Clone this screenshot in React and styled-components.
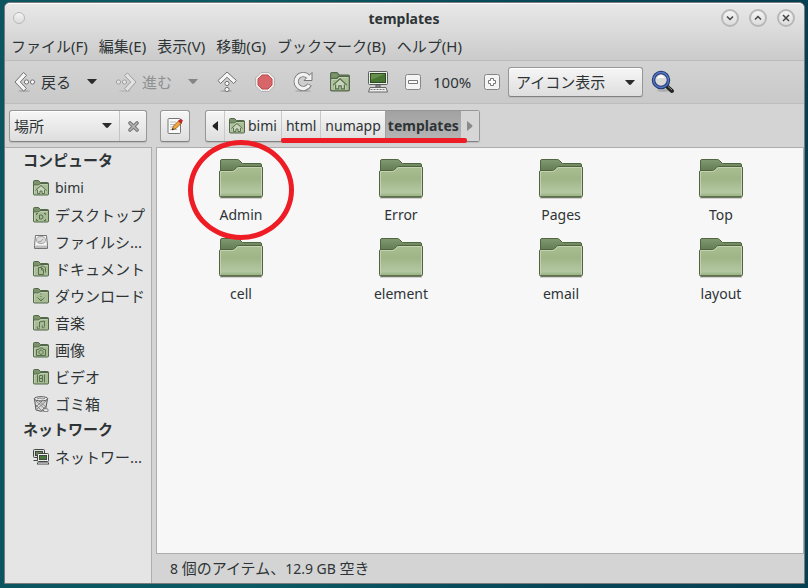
import React, { useState } from 'react';
import styled, { createGlobalStyle, css } from 'styled-components';

const GlobalStyle = createGlobalStyle`
  * {
    box-sizing: border-box;
  }
  body {
    margin: 0;
    background: linear-gradient(90deg, #0b5560 0%, #0a5a63 30%, #074557 70%, #054052 100%);
    color: #2e3436;
    font-family: 'Noto Sans', 'Noto Sans CJK JP', sans-serif;
    font-size: 15px;
    line-height: 20px;
  }
  button, select {
    margin: 0;
    padding: 0;
    border: 0;
    background: none;
    color: inherit;
    font: inherit;
  }
  svg {
    display: block;
    flex: none;
  }
`;

const Desktop = styled.div`
  display: flex;
  min-height: 100vh;
  padding: 2px 3px 4px 4px;
`;

const Window = styled.div`
  flex: 1;
  min-width: 0;
  display: flex;
  flex-direction: column;
  border: 1px solid #7b7b7b;
  border-radius: 6px 6px 0 0;
  background: #d4d4d4;
`;

const Header = styled.header`
  border-top: 1px solid #fff;
  border-bottom: 1px solid #bcbcbc;
  border-radius: 5px 5px 0 0;
  background: linear-gradient(#e8e8e8, #cbcbcb);
`;

const TitleBar = styled.div`
  display: grid;
  grid-template-columns: 1fr auto 1fr;
  align-items: center;
  height: 27px;
  padding: 0 9px 0 8px;
`;

const Title = styled.h1`
  margin: 0;
  padding-top: 3px;
  font-size: 14px;
  line-height: 20px;
`;

const TitleButtons = styled.div`
  display: flex;
  justify-content: ${({ $end }) => ($end ? 'flex-end' : 'flex-start')};
  gap: 10px;
`;

const RoundButton = styled.button`
  display: flex;
  align-items: center;
  justify-content: center;
  width: ${({ $small }) => ($small ? '12px' : '18px')};
  height: ${({ $small }) => ($small ? '12px' : '18px')};
  border: ${({ $small }) => ($small ? '1px' : '2px')} solid #b8b8b8;
  border-radius: 50%;
  background: linear-gradient(#f4f4f4, #dcdcdc);
`;

const MenuBar = styled.nav`
  display: flex;
  gap: 11px;
  height: 29px;
  padding: 4px 6px 0;
`;

const MenuButton = styled.button`
  height: 22px;
  white-space: nowrap;
`;

const Toolbar = styled.div`
  display: flex;
  align-items: center;
  height: 43px;
  padding: 0 9px;
  border-bottom: 1px solid #bdbdbd;
  background: linear-gradient(#d3d3d3, #c9c9c9);
`;

const ToolButton = styled.button`
  display: flex;
  align-items: center;
  gap: 5px;
  height: 32px;
  margin-right: ${({ $space }) => $space || 16}px;
  white-space: nowrap;

  &:disabled {
    color: #8f9191;
  }
`;

const ZoomLabel = styled.span`
  width: 39px;
  margin-right: 12px;
`;

const raised = css`
  border: 1px solid #979797;
  border-bottom-color: #828282;
  border-radius: 3px;
  background: linear-gradient(#f6f6f6, #dedede);
  box-shadow: inset 0 1px 0 #fff, 0 1px 1px #bcbcbc;
`;

const SelectBox = styled.div`
  position: relative;
  width: ${({ $width }) => $width}px;
  height: 30px;
  ${({ $flat }) => !$flat && raised}
  ${({ $flat }) => !$flat && 'margin-right: 8px;'}

  select {
    width: 100%;
    height: 100%;
    padding: 0 ${({ $flat }) => ($flat ? 4 : 7)}px;
    appearance: none;
  }
  svg {
    position: absolute;
    right: 7px;
    top: 12px;
    pointer-events: none;
  }
`;

const LocationBar = styled.div`
  display: flex;
  align-items: flex-start;
  height: 43px;
  padding: 6px 4px 0;
`;

const SideChooser = styled.div`
  display: flex;
  height: 32px;
  margin-right: 13px;
  ${raised}
`;

const SquareButton = styled.button`
  display: flex;
  align-items: center;
  justify-content: center;
  width: ${({ $inner }) => ($inner ? 27 : 30)}px;
  height: ${({ $inner }) => ($inner ? 30 : 32)}px;
  ${({ $inner }) => ($inner ? 'border-left: 1px solid #c4c4c4;' : raised)}
`;

const PathBar = styled.div`
  display: flex;
  height: 32px;
  margin-left: 15px;
  ${raised}
`;

const PathMarked = styled.div`
  position: relative;
  display: flex;
`;

const PathButton = styled.button`
  display: flex;
  align-items: center;
  justify-content: center;
  gap: 3px;
  height: 30px;
  padding: 0 ${({ $arrow }) => ($arrow ? 6 : 4)}px;
  border-left: ${({ $first }) => ($first ? 0 : 1)}px solid #c9c9c9;
  font-size: 14px;

  &:disabled {
    background: #d6d6d6;
  }
  ${({ $current }) =>
    $current &&
    css`
      padding: 0 2px;
      border-left-color: #a0a0a0;
      background: linear-gradient(#a2a2a2, #b6b6b6);
      font-weight: bold;
    `}
`;

const Underline = styled.div`
  position: absolute;
  left: 0;
  right: -6px;
  top: 27px;
  height: 5px;
  border-radius: 2px;
  background: #ee1c24;
`;

const Body = styled.div`
  flex: 1;
  display: grid;
  grid-template-columns: 147px minmax(0, 1fr);
  gap: 4px;
`;

const Sidebar = styled.aside`
  border: solid #adadad;
  border-width: 1px 1px 0 0;
  background: #e5e5e5;
`;

const SideHeading = styled.h2`
  margin: 0;
  padding-left: 18px;
  height: 26px;
  font-size: 15px;
  line-height: 24px;
`;

const SideList = styled.ul`
  margin: 0;
  padding: 0;
  list-style: none;
`;

const SideItem = styled.a`
  display: flex;
  align-items: center;
  gap: 6px;
  height: 27px;
  padding-left: 28px;
  color: inherit;
  font-size: ${({ $latin }) => ($latin ? 14 : 15)}px;
  text-decoration: none;
  white-space: nowrap;
`;

const Main = styled.main`
  display: flex;
  flex-direction: column;
`;

const IconView = styled.div`
  flex: 1;
  display: grid;
  grid-template-columns: repeat(4, 1fr);
  grid-auto-rows: 79px;
  padding: 8px 2px 8px 4px;
  border: 1px solid #adadad;
  background: #f7f7f7;
`;

const FolderItem = styled.a`
  position: relative;
  display: flex;
  flex-direction: column;
  align-items: center;
  gap: 1px;
  color: inherit;
  font-size: 14px;
  text-decoration: none;
`;

const Circle = styled.div`
  position: absolute;
  left: 50%;
  top: -16px;
  z-index: 1;
  width: 106px;
  height: 100px;
  margin-left: -53px;
  border: 5px solid #ee1c24;
  border-radius: 50%;
`;

const StatusBar = styled.footer`
  height: 29px;
  padding: 4px 14px;

  small {
    font-size: 14px;
  }
`;

const DownArrow = ({ color = '#2b2b2b' }) => (
  <svg width="10" height="6" viewBox="0 0 10 6">
    <path d="M0 0h10L6 4.600q-1 .8-2 0z" fill={color} />
  </svg>
);

const SideArrow = ({ right }) => (
  <svg width="6" height="10" viewBox="0 0 6 10">
    <path d={right ? 'M0 0v10l5-4q1-1 0-2z' : 'M6 0v10L1 6Q0 5 1 4z'} fill={right ? '#8a8a8a' : '#222'} />
  </svg>
);

// direction arrow with two beads as its shaft
const BeadArrow = ({ rotate = 0, faded }) => (
  <svg width="22" height="22" viewBox="0 0 22 22" opacity={faded ? 0.5 : 1}>
    <ellipse cx="10" cy="20" rx="6" ry="1" fill="#000" opacity=".15" />
    <g transform={`rotate(${rotate} 11 11)`} strokeLinejoin="round">
      <path d="M9.500 1.500l3 2.800L6.300 11l6.200 6.500-3 2.500L1 11z" fill="#f4f4f4" stroke="#737373" />
      <circle cx="12.500" cy="11" r="2.100" fill="#fafafa" stroke="#737373" />
      <circle cx="18.500" cy="11" r="2.100" fill="#fafafa" stroke="#737373" />
    </g>
  </svg>
);

const StopIcon = () => (
  <svg width="22" height="22" viewBox="0 0 22 22">
    <path d="M7 1.500h8l5.500 5.500v8L15 20.500H7L1.500 15V7z" fill="#ececec" stroke="#b3b3b3" />
    <path d="M8 4h6l4 4v6l-4 4H8l-4-4V8z" fill="#d66668" stroke="#c14b4e" />
  </svg>
);

const ReloadIcon = () => (
  <svg width="22" height="22" viewBox="0 0 22 22" fill="none">
    <ellipse cx="11" cy="20" rx="8" ry="1" fill="#000" opacity=".15" />
    <path d="M16.500 6A7 7 0 1 0 17.500 13.500" stroke="#777" strokeWidth="5" />
    <path d="M12 9.500h8V1.500z" fill="#f2f2f2" stroke="#777" strokeLinejoin="round" />
    <path d="M16.500 6A7 7 0 1 0 17.200 14" stroke="#f2f2f2" strokeWidth="3.400" />
  </svg>
);

const glyphs = {
  home: <path d="M2.500 10.500l5.500-5 5.500 5M4.500 10v3.500h2.500v-2.500h2v2.500h2.500V10" />,
  desktop: <path d="M5 6.500H3.500V8M11 6.500h1.500V8M5 13.500H3.500V12M11 13.500h1.500V12M6.500 8v4h1.500q2 0 2-2t-2-2z" />,
  documents: <path d="M5.500 6.500h3l2 2v5h-5zM8.500 6.500v2.500h2M7.500 5h3l2 2v4.500" />,
  downloads: <path d="M8 5.500v1M8 8v1M4.500 9.500L8 13l3.500-3.500M8 10.500v1" />,
  music: <path d="M6.500 12V7l5-1v5M5 11.500a1.200 1.200 0 1 0 1.500 1M10 10.500a1.200 1.200 0 1 0 1.500 1" />,
  pictures: <path d="M3.500 7.500h2l1-1.500h3l1 1.500h2v6h-9zM8 8a2.200 2.200 0 1 0 .1 0z" />,
  videos: <path d="M4.500 5.500v8M11.500 5.500v8M6.500 6.500h3v6h-3zM6.500 9.500h3" />,
};

const SmallFolder = ({ glyph, size = 16 }) => (
  <svg width={size} height={size} viewBox="0 0 16 16">
    <path d="M.5 14V1.500q0-1 1-1h4L7.500 2.500h7q1 0 1 1V14z" fill="#7b9469" stroke="#53684a" />
    <path d="M.5 5h5L7 3.500h8.500V14q0 1-1 1h-13q-1 0-1-1z" fill="#a8bc95" stroke="#53684a" />
    <path d="M1.500 14V6h4.500l1.500-1.500h7" fill="none" stroke="#c8d6bb" strokeWidth=".7" />
    {glyph === 'home' && <path d="M3.500 10L8 6l4.500 4v3.500h-9z" fill="#c9d6bd" />}
    <g fill="none" stroke="#5a704d" strokeWidth="1">{glyphs[glyph]}</g>
  </svg>
);

const ComputerIcon = () => (
  <svg width="22" height="22" viewBox="0 0 22 22">
    <rect x="1.500" y=".5" width="19" height="13" rx="1" fill="#ededed" stroke="#5c5f5c" />
    <rect x="3.500" y="2.500" width="15" height="9" fill="#487531" stroke="#294c20" />
    <path d="M4 3h14L4 9z" fill="#73985a" opacity=".7" />
    <path d="M9 14h4v2H9z" fill="#b5b5b5" stroke="#555" />
    <path d="M3 16.500h16l1.500 4.500h-19z" fill="#eee" stroke="#686868" />
    <path d="M3.500 18.500h15" stroke="#777" strokeDasharray="2 1" />
  </svg>
);

const ZoomIcon = ({ plus }) => (
  <svg width="16" height="16" viewBox="0 0 16 16">
    <rect x=".5" y=".5" width="15" height="15" rx="2" fill="#f4f4f4" stroke="#858585" />
    <path
      d={plus ? 'M6.500 4.500h3v2h2v3h-2v2h-3v-2h-2v-3h2z' : 'M3.500 6.500h9v3h-9z'}
      fill="#fff"
      stroke="#777"
    />
  </svg>
);

const SearchIcon = () => (
  <svg width="24" height="24" viewBox="0 0 24 24">
    <ellipse cx="13" cy="20.500" rx="7" ry="1.500" fill="#000" opacity=".15" />
    <path d="M15.500 16l5.500 5" stroke="#222" strokeWidth="4" strokeLinecap="round" />
    <path d="M17 16.500l4 3.500" stroke="#8b8b7b" strokeWidth="1" />
    <circle cx="10" cy="10" r="7.500" fill="#d9d9d9" stroke="#203a72" strokeWidth="3.500" />
    <circle cx="10" cy="10" r="7.500" fill="none" stroke="#5875c4" strokeWidth="1.500" />
    <path d="M6 9q1-4 5-4l3 3q-4-1-8 1z" fill="#fff" />
  </svg>
);

const CloseIcon = () => (
  <svg width="11" height="11" viewBox="0 0 11 11">
    <path d="M2 2l7 7M9 2l-7 7" stroke="#777" strokeWidth="3.600" strokeLinecap="round" />
    <path d="M2 2l7 7M9 2l-7 7" stroke="#b5b5b5" strokeWidth="1.500" strokeLinecap="round" />
  </svg>
);

const EditIcon = () => (
  <svg width="16" height="16" viewBox="0 0 16 16">
    <rect x="1" y=".5" width="12.500" height="15" rx="1" fill="#fafafa" stroke="#777" />
    <path d="M3 4h6M3 6.500h5M3 9h3M3 11.500h7" stroke="#bbb" />
    <path d="M5 12l1.500-4L12 2.500 14.500 5 9 10.500z" fill="#f2a63b" stroke="#84551d" strokeWidth=".8" />
    <path d="M11.500 3L13 1.500q1.500-.5 2.500 1l-1.500 3z" fill="#d4202c" stroke="#8d1720" strokeWidth=".6" />
    <path d="M5 12l.7-2 1.300 1.200z" fill="#222" />
  </svg>
);

const DiskIcon = () => (
  <svg width="16" height="16" viewBox="0 0 16 16">
    <path d="M2.500 1.500h11l1 10v3h-13v-3z" fill="#f5f5f5" stroke="#737373" />
    <ellipse cx="8" cy="6" rx="4.500" ry="3.500" fill="#dcdcdc" stroke="#a5a5a5" />
    <path d="M5 8q4 0 5-3" stroke="#999" fill="none" />
    <path d="M2 11.500h12v2.500H2z" fill="#bcbcbc" />
  </svg>
);

const TrashIcon = () => (
  <svg width="16" height="16" viewBox="0 0 16 16">
    <path d="M1.500 3l1.500 11q5 2.500 9.500 0L14.500 3z" fill="#d8d8d8" stroke="#555" />
    <path d="M3 5l9 8M6 5l7 6M3 9l6 6M13 5l-9 8M9 5l-6 6M13 10l-5 5" stroke="#777" strokeWidth=".8" />
    <ellipse cx="8" cy="2.800" rx="6.800" ry="2.100" fill="#efefef" stroke="#555" />
    <path d="M4 3l3-1 2 1 3-.5" stroke="#888" fill="none" />
    <path d="M11 12.500l4 .5v2.500h-4.500z" fill="#eee" stroke="#666" strokeWidth=".7" />
  </svg>
);

const NetworkIcon = () => (
  <svg width="16" height="16" viewBox="0 0 16 16" stroke="#424642">
    <rect x=".5" y=".5" width="11" height="8" rx="1" fill="#ddd" />
    <rect x="2.500" y="2.500" width="7" height="4" fill="#638653" />
    <path d="M.5 11.500h4" />
    <rect x="4.500" y="4.500" width="11" height="8" rx="1" fill="#eee" />
    <rect x="6.500" y="6.500" width="7" height="4" fill="#477936" />
    <path d="M4 14.500h12" strokeWidth="2" />
    <path d="M5 14.500h10" stroke="#ddd" strokeWidth=".7" />
  </svg>
);

const Folder = () => (
  <svg width="48" height="48" viewBox="0 0 48 48">
    <defs>
      <linearGradient id="front" x1="0" y1="0" x2="0" y2="1">
        <stop offset="0" stopColor="#a9bf92" />
        <stop offset=".4" stopColor="#9fb587" />
        <stop offset=".85" stopColor="#b3c8a2" />
        <stop offset="1" stopColor="#93ac7c" />
      </linearGradient>
      <linearGradient id="back" x1="0" y1="0" x2="0" y2="1">
        <stop offset="0" stopColor="#829971" />
        <stop offset=".35" stopColor="#5f7850" />
      </linearGradient>
    </defs>
    <path d="M3 42h42" stroke="#000" strokeWidth="2" opacity=".15" />
    <path d="M3.500 39V5q0-1.500 1.500-1.500h15.500q1 0 2 1l3 3H43q1.500 0 1.500 1.500v30z" fill="url(#back)" stroke="#50663f" />
    <path
      d="M2.500 16q0-1.500 1.500-1.500h11.500q1 0 2-1l2-2q1-1 2.500-1H44q1.500 0 1.500 1.500v27.500q0 1.500-1.500 1.500H4q-1.500 0-1.500-1.500z"
      fill="url(#front)"
      stroke="#50633f"
    />
    <path d="M3.500 39.500v-24h12.500q1 0 2-1l2-2q1-1 2-1h22.500v28" fill="none" stroke="#c9d7ba" opacity=".8" />
    <path d="M4 41h40" stroke="#485a3b" />
  </svg>
);

const menus = ['ファイル(F)', '編集(E)', '表示(V)', '移動(G)', 'ブックマーク(B)', 'ヘルプ(H)'];

const places = [
  { name: 'bimi', icon: <SmallFolder glyph="home" />, latin: true },
  { name: 'デスクトップ', icon: <SmallFolder glyph="desktop" /> },
  { name: 'ファイルシ...', icon: <DiskIcon /> },
  { name: 'ドキュメント', icon: <SmallFolder glyph="documents" /> },
  { name: 'ダウンロード', icon: <SmallFolder glyph="downloads" /> },
  { name: '音楽', icon: <SmallFolder glyph="music" /> },
  { name: '画像', icon: <SmallFolder glyph="pictures" /> },
  { name: 'ビデオ', icon: <SmallFolder glyph="videos" /> },
  { name: 'ゴミ箱', icon: <TrashIcon /> },
];

const network = [{ name: 'ネットワー...', icon: <NetworkIcon /> }];

const folders = ['Admin', 'Error', 'Pages', 'Top', 'cell', 'element', 'email', 'layout'];

const Places = ({ items }) => (
  <SideList>
    {items.map((item) => (
      <li key={item.name}>
        <SideItem href="#" $latin={item.latin}>
          {item.icon}
          {item.name}
        </SideItem>
      </li>
    ))}
  </SideList>
);

const WindowControl = ({ label, d }) => (
  <RoundButton aria-label={label}>
    <svg width="8" height="8" viewBox="0 0 8 8">
      <path d={d} fill="none" stroke="#444" strokeWidth="1.500" />
    </svg>
  </RoundButton>
);

const App = () => {
  const [view, setView] = useState('icon');
  const [side, setSide] = useState('places');

  return (
    <Desktop>
      <GlobalStyle />
      <Window>
        <Header>
          <TitleBar>
            <TitleButtons>
              <RoundButton $small aria-label="メニュー" />
            </TitleButtons>
            <Title>templates</Title>
            <TitleButtons $end>
              <WindowControl label="最小化" d="M1 2.500l3 3 3-3" />
              <WindowControl label="最大化" d="M1 5.500l3-3 3 3" />
              <WindowControl label="閉じる" d="M1 1l6 6M7 1l-6 6" />
            </TitleButtons>
          </TitleBar>
          <MenuBar>
            {menus.map((menu) => (
              <MenuButton key={menu}>{menu}</MenuButton>
            ))}
          </MenuBar>
        </Header>
        <Toolbar>
          <ToolButton><BeadArrow />戻る</ToolButton>
          <ToolButton $space={18} aria-label="履歴"><DownArrow /></ToolButton>
          <ToolButton disabled><BeadArrow rotate={180} faded />進む</ToolButton>
          <ToolButton $space={18} disabled aria-label="履歴"><DownArrow color="#858585" /></ToolButton>
          <ToolButton aria-label="上へ"><BeadArrow rotate={90} /></ToolButton>
          <ToolButton aria-label="中止"><StopIcon /></ToolButton>
          <ToolButton aria-label="再読み込み"><ReloadIcon /></ToolButton>
          <ToolButton $space={17} aria-label="ホーム"><SmallFolder glyph="home" size={20} /></ToolButton>
          <ToolButton aria-label="コンピュータ"><ComputerIcon /></ToolButton>
          <ToolButton $space={12} aria-label="縮小"><ZoomIcon /></ToolButton>
          <ZoomLabel>100%</ZoomLabel>
          <ToolButton $space={8} aria-label="拡大"><ZoomIcon plus /></ToolButton>
          <SelectBox $width={135}>
            <select aria-label="表示形式" value={view} onChange={(e) => setView(e.target.value)}>
              <option value="icon">アイコン表示</option>
            </select>
            <DownArrow />
          </SelectBox>
          <ToolButton aria-label="検索"><SearchIcon /></ToolButton>
        </Toolbar>
        <LocationBar>
          <SideChooser>
            <SelectBox $flat $width={109}>
              <select aria-label="サイドペイン" value={side} onChange={(e) => setSide(e.target.value)}>
                <option value="places">場所</option>
              </select>
              <DownArrow />
            </SelectBox>
            <SquareButton $inner aria-label="サイドペインを閉じる"><CloseIcon /></SquareButton>
          </SideChooser>
          <SquareButton aria-label="場所を編集"><EditIcon /></SquareButton>
          <PathBar>
            <PathButton $arrow $first aria-label="前へ"><SideArrow /></PathButton>
            <PathButton><SmallFolder glyph="home" />bimi</PathButton>
            <PathMarked>
              <PathButton>html</PathButton>
              <PathButton>numapp</PathButton>
              <PathButton $current>templates</PathButton>
              <Underline />
            </PathMarked>
            <PathButton $arrow $first disabled aria-label="次へ"><SideArrow right /></PathButton>
          </PathBar>
        </LocationBar>
        <Body>
          <Sidebar>
            <SideHeading>コンピュータ</SideHeading>
            <Places items={places} />
            <SideHeading>ネットワーク</SideHeading>
            <Places items={network} />
          </Sidebar>
          <Main>
            <IconView>
              {folders.map((name) => (
                <FolderItem key={name} href="#">
                  <Folder />
                  {name}
                  {name === 'Admin' && <Circle />}
                </FolderItem>
              ))}
            </IconView>
            <StatusBar>
              <small>8 </small>個のアイテム、<small>12.9 GB </small>空き
            </StatusBar>
          </Main>
        </Body>
      </Window>
    </Desktop>
  );
};

export default App;
